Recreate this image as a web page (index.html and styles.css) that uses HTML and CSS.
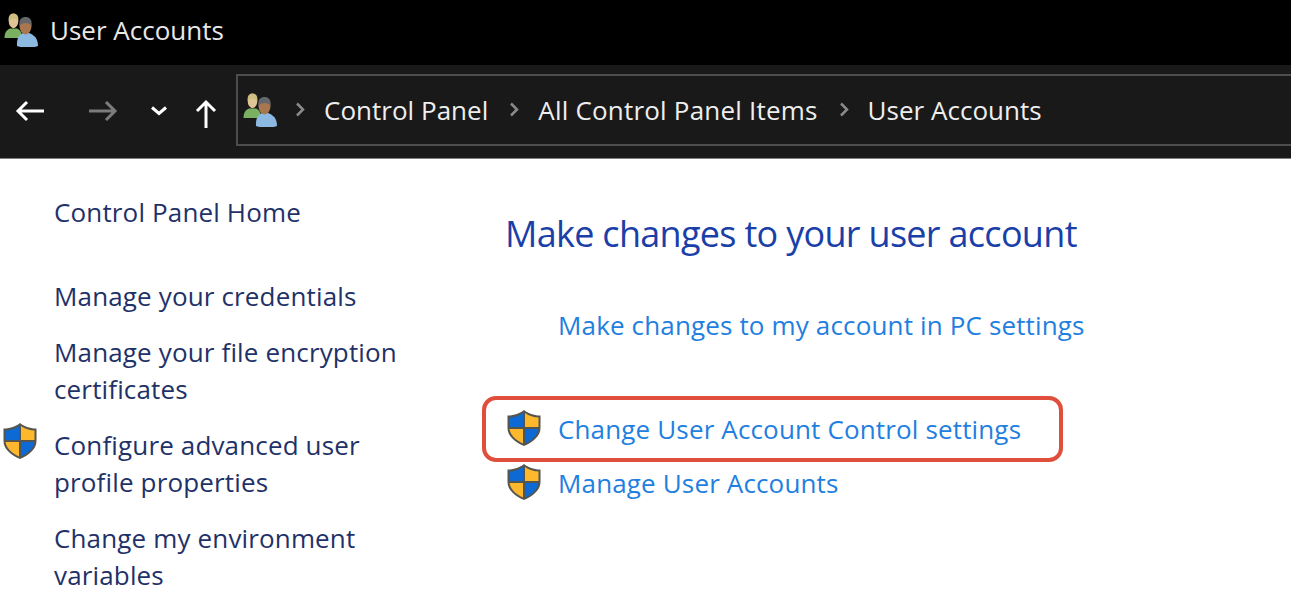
FILE: index.html
```html
<!DOCTYPE html>
<html lang="en">
<head>
<meta charset="utf-8">
<title>User Accounts</title>
<link rel="stylesheet" href="styles.css">
</head>
<body>
<svg class="defs" width="0" height="0" aria-hidden="true">
  <defs>
    <filter id="soft"><feGaussianBlur stdDeviation="0.5"/></filter>
    <symbol id="shield" viewBox="0 0 36 38">
      <g filter="url(#soft)">
        <path d="M18 1 C13 5 7 6.500 1.500 6.500 V19 C1.500 27 9 33 18 37 C27 33 34.500 27 34.500 19 V6.500 C29 6.500 23 5 18 1Z" fill="#55554e"/>
        <path d="M17 4 C13 7 8 8.300 3.500 8.500 V18 H17Z" fill="#0c6ad4"/>
        <path d="M19 4 C23 7 28 8.300 32.500 8.500 V18 H19Z" fill="#fdb82e"/>
        <path d="M3.500 20 H17 V34.500 C10 31.500 4.500 26 3.500 20Z" fill="#fdb82e"/>
        <path d="M19 20 H32.500 C31.500 26 26 31.500 19 34.500Z" fill="#0c6ad4"/>
      </g>
    </symbol>
    <symbol id="users" viewBox="0 0 36 34">
      <g filter="url(#soft)">
        <path d="M0.500 25 C0.500 19 3 17 6 15.500 H13 C16 17 18 19 18 25 Z" fill="#79b062"/>
        <ellipse cx="9.500" cy="8" rx="4.800" ry="7.200" fill="#e0c496"/>
        <path d="M4.700 8 C4 2 7 0.500 9.500 0.500 C12.500 0.500 15 2.500 14.300 8 C12.500 4.500 7 4.500 4.700 8Z" fill="#cdbd80"/>
        <path d="M13 33 C12.500 25 15 22 19 20 H25 C30 22 34 25 34 33 C28 35 19 35 13 33Z" fill="#8bb9e2"/>
        <ellipse cx="21.500" cy="13" rx="6" ry="8.500" fill="#a87650"/>
        <path d="M15.500 13 C14.500 6 18 4 21.500 4 C25 4 28.500 6 27.500 13 C25.500 9 18 9 15.500 13Z" fill="#65676a"/>
      </g>
    </symbol>
  </defs>
</svg>

<header class="titlebar">
  <svg class="users-icon"><use href="#users"/></svg>
  <span class="title">User Accounts</span>
</header>

<nav class="navbar">
  <div class="nav-buttons">
    <svg class="nav-icon back" viewBox="0 0 30 24"><path d="M29 12H3M12 3l-9 9 9 9" /></svg>
    <svg class="nav-icon forward" viewBox="0 0 30 24"><path d="M1 12h26M18 3l9 9-9 9" /></svg>
    <svg class="nav-icon chevron" viewBox="0 0 18 12"><path d="M2 2.500l7 6 7-6" /></svg>
    <svg class="nav-icon up" viewBox="0 0 24 30"><path d="M12 29V3M3 12l9-9 9 9" /></svg>
  </div>
  <div class="address">
    <svg class="users-icon address-icon"><use href="#users"/></svg>
    <svg class="sep first" viewBox="0 0 11 15"><path d="M2 1.500l6 6-6 6"/></svg>
    <span class="crumb">Control Panel</span>
    <svg class="sep" viewBox="0 0 11 15"><path d="M2 1.500l6 6-6 6"/></svg>
    <span class="crumb wide">All Control Panel Items</span>
    <svg class="sep" viewBox="0 0 11 15"><path d="M2 1.500l6 6-6 6"/></svg>
    <span class="crumb">User Accounts</span>
  </div>
</nav>

<main class="content">
  <aside class="sidebar">
    <a class="side-link home">Control Panel Home</a>
    <a class="side-link">Manage your credentials</a>
    <a class="side-link">Manage your file encryption<br>certificates</a>
    <div class="side-shielded">
      <svg class="shield side-shield"><use href="#shield"/></svg>
      <a class="side-link">Configure advanced user<br>profile properties</a>
    </div>
    <a class="side-link">Change my environment<br>variables</a>
  </aside>
  <section class="main-panel">
    <h1 class="heading">Make changes to your user account</h1>
    <a class="task plain">Make changes to my account in PC settings</a>
    <div class="task-row highlighted">
      <svg class="shield"><use href="#shield"/></svg>
      <a class="task">Change User Account Control settings</a>
    </div>
    <div class="task-row">
      <svg class="shield"><use href="#shield"/></svg>
      <a class="task">Manage User Accounts</a>
    </div>
  </section>
</main>
</body>
</html>
```

FILE: styles.css
```css
*, *::before, *::after { box-sizing: border-box; }
html, body { margin: 0; height: 100%; overflow: hidden; background: #fff; }
body { font-family: "Open Sans", "Noto Sans", sans-serif; }
.defs { position: absolute; }

.titlebar {
  height: 65px;
  background: #000;
  display: flex;
  align-items: center;
  padding: 0 0 6px 4px;
  color: #e8e8e8;
}
.users-icon { width: 36px; height: 34px; flex: none; }
.title { margin-left: 10px; font-size: 26px; letter-spacing: 0; }

.navbar {
  height: 94px;
  background: #191919;
  border-bottom: 1px solid #808080;
  padding-bottom: 3px;
  display: flex;
  align-items: center;
  color: #eee;
}
.nav-buttons { width: 236px; display: flex; align-items: center; flex: none; padding-left: 15px; margin-top: 2px; }
.nav-icon { fill: none; stroke-width: 3; flex: none; }
.back { width: 30px; height: 24px; stroke: #fff; }
.forward { width: 30px; height: 24px; stroke: #7c7c7c; margin-left: 43px; }
.chevron { width: 18px; height: 12px; stroke: #fff; margin-left: 32px; }
.up { width: 24px; height: 30px; stroke: #fff; margin: 6px 0 0 26px; }

.address {
  flex: 1;
  height: 72px;
  border: 2px solid #4d4d4d;
  border-right: 0;
  padding: 0 0 0 5px;
  display: flex;
  align-items: center;
  font-size: 26px;
  letter-spacing: 0.02px;
}
.address-icon { margin-top: -1px; }
.wide { letter-spacing: 0.2px; }
.sep { width: 11px; height: 15px; flex: none; fill: none; stroke: #8a8a8a; stroke-width: 2.5; margin: -2px 18px 0 21px; }
.sep.first { margin-left: 16px; }

.content { display: flex; }
.sidebar {
  width: 506px;
  flex: none;
  padding: 34.5px 0 0 54px;
  display: flex;
  flex-direction: column;
  gap: 19px;
}
.side-link {
  display: block;
  color: #1f3268;
  font-size: 26px;
  line-height: 37px;
  letter-spacing: 0.15px;
}
.home { margin-bottom: 28px; }
.side-shielded { position: relative; }
.side-shield { position: absolute; left: -52px; top: -2px; }

.shield { width: 36px; height: 38px; flex: none; margin-top: -3px; }
.main-panel { flex: 1; padding-top: 50px; }
.heading {
  margin: 0 0 47px -1px;
  color: #1b3fa8;
  font-size: 36px;
  font-weight: 400;
  line-height: 50px;
  letter-spacing: -0.7px;
}
.task {
  color: #1f80e0;
  font-size: 26px;
  line-height: 38px;
  letter-spacing: 0.15px;
}
.plain { display: block; margin: 0 0 58px 52px; }
.task-row { display: flex; align-items: center; gap: 16px; height: 54px; width: 557px; }
.highlighted { position: relative; }
.highlighted::before {
  content: "";
  position: absolute;
  left: -24px;
  top: -6px;
  width: 581px;
  height: 66px;
  border: 4px solid #e04f3c;
  border-radius: 14px;
}
```
